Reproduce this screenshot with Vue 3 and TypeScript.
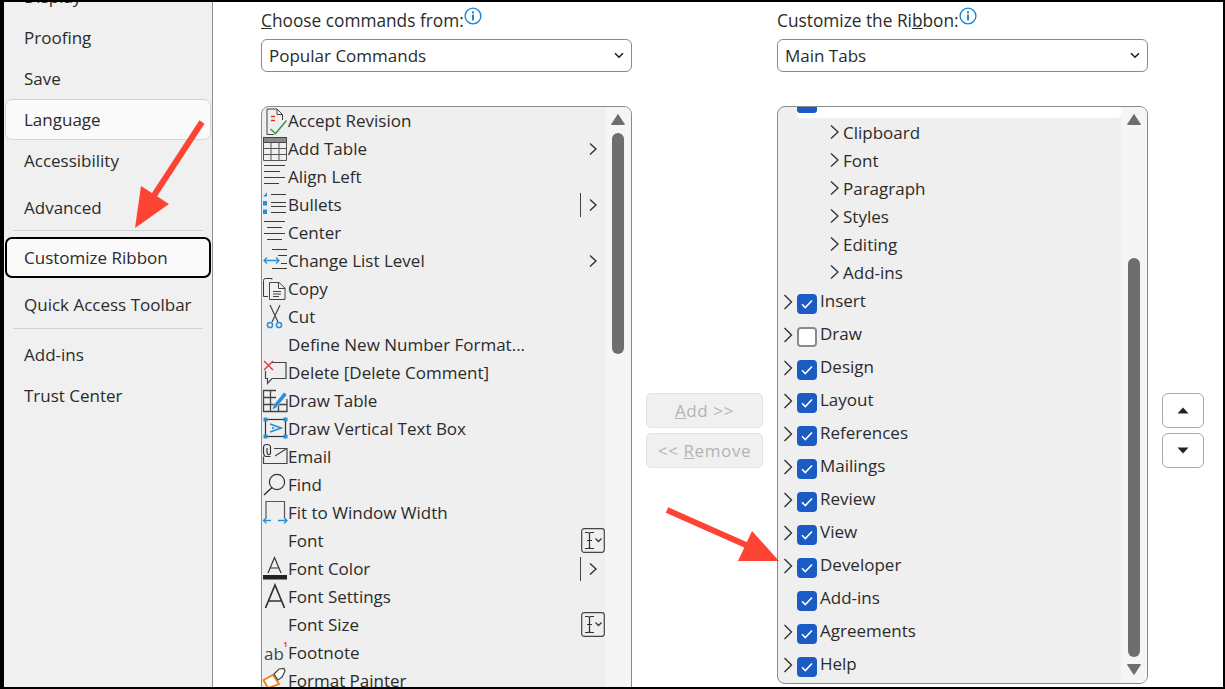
<script setup lang="ts">
interface NavItem { label: string; kind: string }
interface CmdRow { label: string; icon: string; side: string }

const nav: NavItem[] = [
  { label: 'Display', kind: 'first' },
  { label: 'Proofing', kind: '' },
  { label: 'Save', kind: '' },
  { label: 'Language', kind: 'soft' },
  { label: 'Accessibility', kind: 'low' },
  { label: 'Advanced', kind: 'adv' },
  { label: '', kind: 'sep' },
  { label: 'Customize Ribbon', kind: 'active' },
  { label: 'Quick Access Toolbar', kind: 'quick' },
  { label: '', kind: 'sep' },
  { label: 'Add-ins', kind: 'addins' },
  { label: 'Trust Center', kind: '' },
]

const commands: CmdRow[] = [
  { label: 'Accept Revision', icon: 'accept', side: '' },
  { label: 'Add Table', icon: 'table', side: 'chev' },
  { label: 'Align Left', icon: 'left', side: '' },
  { label: 'Bullets', icon: 'bullets', side: 'split' },
  { label: 'Center', icon: 'center', side: '' },
  { label: 'Change List Level', icon: 'level', side: 'chev' },
  { label: 'Copy', icon: 'copy', side: '' },
  { label: 'Cut', icon: 'cut', side: '' },
  { label: 'Define New Number Format...', icon: '', side: '' },
  { label: 'Delete [Delete Comment]', icon: 'delete', side: '' },
  { label: 'Draw Table', icon: 'drawtable', side: '' },
  { label: 'Draw Vertical Text Box', icon: 'vbox', side: '' },
  { label: 'Email', icon: 'email', side: '' },
  { label: 'Find', icon: 'find', side: '' },
  { label: 'Fit to Window Width', icon: 'fit', side: '' },
  { label: 'Font', icon: '', side: 'beam' },
  { label: 'Font Color', icon: 'color', side: 'split' },
  { label: 'Font Settings', icon: 'bigA', side: '' },
  { label: 'Font Size', icon: '', side: 'beam' },
  { label: 'Footnote', icon: 'foot', side: '' },
  { label: 'Format Painter', icon: 'painter', side: '' },
]

const groups: string[] = ['Clipboard', 'Font', 'Paragraph', 'Styles', 'Editing', 'Add-ins']

const tabs = [
  { label: 'Insert', checked: true, chev: true },
  { label: 'Draw', checked: false, chev: true },
  { label: 'Design', checked: true, chev: true },
  { label: 'Layout', checked: true, chev: true },
  { label: 'References', checked: true, chev: true },
  { label: 'Mailings', checked: true, chev: true },
  { label: 'Review', checked: true, chev: true },
  { label: 'View', checked: true, chev: true },
  { label: 'Developer', checked: true, chev: true },
  { label: 'Add-ins', checked: true, chev: false },
  { label: 'Agreements', checked: true, chev: true },
  { label: 'Help', checked: true, chev: true },
]
</script>

<template>
  <div class="frame">
    <aside class="sidebar">
      <template v-for="(item, i) in nav" :key="i">
        <div v-if="item.kind === 'sep'" class="sep"></div>
        <div v-else class="nav-item" :class="item.kind">{{ item.label }}</div>
      </template>
    </aside>

    <main class="main">
      <section class="col">
        <div class="label"><span><u>C</u>hoose commands from:</span>
          <svg class="info" width="18" height="18" viewBox="0 0 18 18"><circle cx="9" cy="9" r="7.9" fill="#fff" stroke="#1b86d6" stroke-width="1.4"/><rect x="8" y="7.6" width="2" height="5.8" fill="#1b86d6"/><rect x="8" y="4.4" width="2" height="2" fill="#1b86d6"/></svg>
        </div>
        <div class="select">Popular Commands
          <svg class="sel-chev" width="10" height="7" viewBox="0 0 10 7"><path d="M1 1.2 5 5.2 9 1.2" fill="none" stroke="#222" stroke-width="1.6"/></svg>
        </div>
        <div class="list list-left">
          <div class="rows">
            <div v-for="row in commands" :key="row.label" class="cmd">
              <svg class="cmd-icon" width="26" height="28" viewBox="0 0 26 28" fill="none" stroke="#3a3a3a" stroke-width="1">
                <template v-if="row.icon === 'accept'">
                  <path d="M5 2H15L20.5 7.5V13M15 2V7.5H20.5M5 2V27.5H12" stroke="#444"/>
                  <path d="M9 9.5H13M9 13.5H13" stroke="#e0342c" stroke-width="1.4"/>
                  <path d="M8.5 22 13.5 26.5 24.5 13.5" stroke="#3d9a4b" stroke-width="1.6"/>
                </template>
                <template v-else-if="row.icon === 'table'">
                  <rect x="1.5" y="2.5" width="23" height="5" fill="#8a8a8a" stroke="#444"/>
                  <path d="M1.5 7.5V25.5H24.5V7.5M1.5 13.5H24.5M1.5 19.5H24.5M9 7.5V25.5M17 7.5V25.5" stroke="#555"/>
                </template>
                <template v-else-if="row.icon === 'left'">
                  <path d="M2 2.5H23M2 8.5H18M2 14.5H23M2 20.5H17" />
                </template>
                <template v-else-if="row.icon === 'bullets'">
                  <path d="M9 3.5H24M9 11.5H24M9 15.5H24M9 21.5H24"/>
                  <path d="M5 1.5V5.5H1Z" fill="#2b8fd6" stroke="none"/>
                  <rect x="1" y="10" width="4" height="4.5" fill="#2b8fd6" stroke="none"/>
                  <rect x="1" y="18.5" width="4" height="4.5" fill="#2b8fd6" stroke="none"/>
                </template>
                <template v-else-if="row.icon === 'center'">
                  <path d="M2 2.5H23M5 8.5H20M2 14.5H23M5 20.5H20"/>
                </template>
                <template v-else-if="row.icon === 'level'">
                  <path d="M10 2.5H25M16 8.5H25M19 16.5H25M10 21.5H25"/>
                  <path d="M2 13.5H17M5 10.5 2 13.5 5 16.5M14 10.5 17 13.5 14 16.5" stroke="#2b8fd6" stroke-width="1.3"/>
                </template>
                <template v-else-if="row.icon === 'copy'">
                  <path d="M10 4.5V3.5H3.5Q1.5 3.5 1.5 5.5V21.5H6"/>
                  <path d="M7.5 7.5H17L23 13V24.5H7.5ZM16.5 7.5V13.5H23M11 16.5H19M11 19H19M11 21.5H17" stroke="#444"/>
                </template>
                <template v-else-if="row.icon === 'cut'">
                  <path d="M8 2 16 19M18 2 10 19" stroke="#444" stroke-width="1.2"/>
                  <circle cx="8" cy="22" r="2.6" stroke="#2b8fd6" stroke-width="1.5"/>
                  <circle cx="17" cy="22" r="2.6" stroke="#2b8fd6" stroke-width="1.5"/>
                </template>
                <template v-else-if="row.icon === 'delete'">
                  <path d="M10 3.5H24V19.5H10L5.5 24.5V19.5H3.5V12" stroke="#444" stroke-width="1.2"/>
                  <path d="M2 2 11 11M11 2 2 11" stroke="#e8352c" stroke-width="1.4"/>
                </template>
                <template v-else-if="row.icon === 'drawtable'">
                  <path d="M14 3.5H1.5V24.5H25V12M1.5 10.5H14M1.5 17.5H25M8.5 3.5V24.5M16.5 17.5V24.5" stroke="#444" stroke-width="1.3"/>
                  <path d="M10 23 11.5 18 22 5 25 8 14 21Z" fill="#2b8fd6" stroke="#fff" stroke-width=".5"/>
                </template>
                <template v-else-if="row.icon === 'vbox'">
                  <rect x="3.5" y="4.5" width="20" height="17" stroke="#333" stroke-width="1.2"/>
                  <path d="M8 9 19 13 8 17M11 12V14" stroke="#2b8fd6" stroke-width="1.8"/>
                  <rect x="1.5" y="2.5" width="4" height="4" fill="#2b8fd6" stroke="none"/>
                  <rect x="21.5" y="2.5" width="4" height="4" fill="#2b8fd6" stroke="none"/>
                  <rect x="1.5" y="19.5" width="4" height="4" fill="#2b8fd6" stroke="none"/>
                  <rect x="21.5" y="19.5" width="4" height="4" fill="#2b8fd6" stroke="none"/>
                </template>
                <template v-else-if="row.icon === 'email'">
                  <path d="M12 5.5H25V20.5H1.5V13.5M13 13 24 6" stroke="#444" stroke-width="1.2"/>
                  <path d="M8.5 13.5H4.5Q1.5 13.5 1.5 9V4.5Q1.5 1.5 5 1.5 8.5 1.5 8.5 4.5V10Q8 12 6 11.5 5 11 5 9V5" stroke="#333" stroke-width="1.2"/>
                </template>
                <template v-else-if="row.icon === 'find'">
                  <circle cx="15" cy="11" r="7.6" stroke="#333" stroke-width="1.2"/>
                  <path d="M10 16.5 2 24" stroke="#333" stroke-width="1.5"/>
                </template>
                <template v-else-if="row.icon === 'fit'">
                  <path d="M4 19V2.5H22.5V19" stroke="#555" stroke-width="1.2"/>
                  <path d="M1.5 21.5H9M4.5 18.5 1.5 21.5 4.5 24.5M16 21.5H25M22 18.5 25 21.5 22 24.5" stroke="#2b8fd6" stroke-width="1.3"/>
                </template>
                <template v-else-if="row.icon === 'color'">
                  <path d="M6 18 12.5 2.5 19 18M8 13H17" stroke="#333" stroke-width="1.2"/>
                  <rect x="1" y="20" width="24" height="4.5" fill="#222" stroke="none"/>
                </template>
                <template v-else-if="row.icon === 'bigA'">
                  <path d="M3.5 25 13 2 22.5 25M6.5 18H19.5" stroke="#333" stroke-width="1.7"/>
                </template>
                <template v-else-if="row.icon === 'foot'">
                  <text x="2" y="21" class="ab">ab</text>
                  <text x="21.5" y="8" class="one">1</text>
                </template>
                <template v-else-if="row.icon === 'painter'">
                  <path d="M1.5 13 11 8 17 17 6 21Z" fill="#fff" stroke="#e8821e" stroke-width="1.8"/>
                  <path d="M12 7 17 2 22 1.5 23 4 20 10 16 13Z" fill="#fff" stroke="#444" stroke-width="1.2"/>
                </template>
              </svg>
              <span class="cmd-label">{{ row.label }}</span>
              <span v-if="row.side === 'chev'" class="side side-chev">
                <svg width="10" height="14" viewBox="0 0 10 14"><path d="M2 1.5 8 7 2 12.5" fill="none" stroke="#333" stroke-width="1.4"/></svg>
              </span>
              <span v-else-if="row.side === 'split'" class="side side-split">
                <svg width="19" height="24" viewBox="0 0 19 24"><path d="M.5 0V24" stroke="#444" fill="none"/><path d="M10 6.5 16 12 10 17.5" fill="none" stroke="#333" stroke-width="1.4"/></svg>
              </span>
              <span v-else-if="row.side === 'beam'" class="side side-beam">
                <svg width="24" height="25" viewBox="0 0 24 25" fill="none"><rect x=".7" y=".7" width="22.6" height="23.6" rx="2.5" stroke="#444" stroke-width="1.2"/><path d="M4 4.5H7Q8.5 4.5 8.5 6V19Q8.5 20.5 7 20.5H4M13 4.5H10Q8.5 4.5 8.5 6M13 20.5H10Q8.5 20.5 8.5 19M6 12.5H11" stroke="#333" stroke-width="1.2"/><path d="M14.5 10.5 17.5 13.5 20.5 10.5" stroke="#333" stroke-width="1.3"/></svg>
              </span>
            </div>
          </div>
          <div class="track">
            <svg class="arrow-up" width="14" height="11" viewBox="0 0 14 11"><path d="M7 .5 13.5 10.5H.5Z" fill="#6e6e6e" stroke="#6e6e6e" stroke-linejoin="round"/></svg>
            <div class="thumb thumb-left"></div>
          </div>
        </div>
      </section>

      <div class="mid">
        <button class="btn" type="button"><u>A</u>dd &gt;&gt;</button>
        <button class="btn" type="button">&lt;&lt; <u>R</u>emove</button>
      </div>

      <section class="col">
        <div class="label"><span>Customize the Ri<u>b</u>bon:</span>
          <svg class="info" width="18" height="18" viewBox="0 0 18 18"><circle cx="9" cy="9" r="7.9" fill="#fff" stroke="#1b86d6" stroke-width="1.4"/><rect x="8" y="7.6" width="2" height="5.8" fill="#1b86d6"/><rect x="8" y="4.4" width="2" height="2" fill="#1b86d6"/></svg>
        </div>
        <div class="select">Main Tabs
          <svg class="sel-chev" width="10" height="7" viewBox="0 0 10 7"><path d="M1 1.2 5 5.2 9 1.2" fill="none" stroke="#222" stroke-width="1.6"/></svg>
        </div>
        <div class="list list-right">
          <div class="rows">
            <div class="home-row"><span class="home-check"></span></div>
            <div v-for="g in groups" :key="g" class="group">
              <svg width="9" height="16" viewBox="0 0 9 16"><path d="M1 1.5 8 8 1 14.5" fill="none" stroke="#333" stroke-width="1.4"/></svg>
              <span>{{ g }}</span>
            </div>
            <div class="tabs">
              <div v-for="t in tabs" :key="t.label" class="tab">
                <svg class="tab-chev" :class="{ hidden: !t.chev }" width="10" height="18" viewBox="0 0 10 18"><path d="M1.5 2 8.5 9 1.5 16" fill="none" stroke="#333" stroke-width="1.4"/></svg>
                <span class="check" :class="{ on: t.checked }">
                  <svg v-if="t.checked" width="12" height="10" viewBox="0 0 12 10"><path d="M1 5.2 4.3 8.5 11 1.5" fill="none" stroke="#fff" stroke-width="1.6"/></svg>
                </span>
                <span class="tab-label">{{ t.label }}</span>
              </div>
            </div>
          </div>
          <div class="track">
            <svg class="arrow-up" width="14" height="11" viewBox="0 0 14 11"><path d="M7 .5 13.5 10.5H.5Z" fill="#6e6e6e" stroke="#6e6e6e" stroke-linejoin="round"/></svg>
            <div class="thumb thumb-right"></div>
            <svg class="arrow-down" width="14" height="11" viewBox="0 0 14 11"><path d="M7 10.5 13.5 .5H.5Z" fill="#6e6e6e" stroke="#6e6e6e" stroke-linejoin="round"/></svg>
          </div>
        </div>
      </section>

      <div class="updown">
        <button class="btn-sq" type="button" aria-label="Move up">
          <svg width="12" height="7" viewBox="0 0 12 7"><path d="M6 .5 11.5 6.5H.5Z" fill="#222"/></svg>
        </button>
        <button class="btn-sq" type="button" aria-label="Move down">
          <svg width="12" height="7" viewBox="0 0 12 7"><path d="M6 6.5 11.5 .5H.5Z" fill="#222"/></svg>
        </button>
      </div>
    </main>

    <svg class="overlay" width="1225" height="689" viewBox="0 0 1225 689">
      <path d="M202 122 153 197" stroke="#fd4434" stroke-width="6" fill="none"/>
      <path d="M135 228 141 186 169 204Z" fill="#fd4434"/>
      <path d="M667 510 755 549" stroke="#fd4434" stroke-width="6" fill="none"/>
      <path d="M779 561 752 531 738 561Z" fill="#fd4434"/>
    </svg>
  </div>
</template>

<style>
html, body { margin: 0; padding: 0; background: #fff; }
</style>

<style scoped>
.frame {
  position: relative;
  box-sizing: border-box;
  width: 1225px;
  height: 689px;
  border: solid #000;
  border-width: 2px 2px 2px 4px;
  display: flex;
  overflow: hidden;
  background: #fff;
  color: #2b2b2b;
  font-family: "Open Sans", "Noto Sans", sans-serif;
  font-size: 17px;
}
.sidebar {
  box-sizing: border-box;
  width: 209px;
  flex: none;
  background: #f0f0f0;
  border-right: 1px solid #8f8f8f;
  padding: 0 1px;
}
.nav-item {
  box-sizing: border-box;
  height: 41px;
  line-height: 39px;
  padding-left: 19px;
}
.nav-item.first { margin-top: -25px; }
.nav-item.soft {
  margin: -1px 0 0;
  background: #fafafa;
  border: 1px solid #d4d4d4;
  border-radius: 7px;
  line-height: 39px;
  padding-left: 18px;
}
.nav-item.low { line-height: 41px; }
.nav-item.adv { margin-top: 6px; line-height: 41px; }
.nav-item.active {
  background: #fafafa;
  border: 2px solid #000;
  border-radius: 7px;
  line-height: 37px;
  padding-left: 17px;
  margin-top: 6px;
}
.nav-item.quick { margin-top: 7px; }
.nav-item.addins { margin-top: 6px; }
.sep {
  height: 1px;
  background: #d2d2d2;
  margin: 2px 8px 0;
}
.main {
  flex: 1;
  display: flex;
  padding-left: 48px;
  min-width: 0;
}
.col {
  width: 371px;
  flex: none;
}
.label {
  height: 37px;
  display: flex;
  align-items: flex-start;
  line-height: 38px;
  font-size: 17.3px;
}
.info { margin: 5px 0 0 0; }
.select {
  position: relative;
  box-sizing: border-box;
  height: 33px;
  line-height: 32px;
  padding-left: 7px;
  border: 1px solid #8a8a8a;
  border-radius: 6px;
}
.sel-chev { position: absolute; right: 7px; top: 12px; }
.list {
  box-sizing: border-box;
  display: flex;
  margin-top: 34px;
  border: 1px solid #8a8a8a;
  border-radius: 8px;
  background: #efefef;
  overflow: hidden;
}
.list-left { height: 620px; }
.list-right { height: 578px; }
.rows { flex: 1; min-width: 0; }
.cmd {
  position: relative;
  display: flex;
  align-items: center;
  height: 28px;
}
.cmd-icon { flex: none; }
.cmd-label { white-space: nowrap; margin-top: -2px; }
.side { position: absolute; display: flex; }
.side-chev { left: 326px; top: 7px; }
.side-split { left: 318px; top: 2px; }
.side-beam { left: 319px; top: 1px; }
.ab { font-family: "Open Sans", sans-serif; font-size: 17px; fill: #444; stroke: none; }
.one { font-family: "Open Sans", sans-serif; font-size: 7px; font-weight: 700; fill: #e8352c; stroke: none; }
.track {
  width: 26px;
  flex: none;
  background: #f5f5f5;
  display: flex;
  flex-direction: column;
  align-items: center;
}
.arrow-up { margin-top: 7px; flex: none; }
.arrow-down { margin-top: 7px; flex: none; }
.thumb { width: 12px; background: #6e6e6e; flex: none; }
.thumb-left { height: 221px; margin-top: 8px; border-radius: 6px; }
.thumb-right { height: 399px; margin-top: 133px; border-radius: 6px; }
.home-row {
  height: 11px;
  margin-left: 19px;
  background: #fff;
  border-radius: 0 0 4px 4px;
}
.home-check {
  display: block;
  width: 20px;
  height: 6px;
  background: #1a5cc3;
  border-radius: 0 0 3px 3px;
}
.group {
  height: 28px;
  display: flex;
  align-items: center;
  padding-left: 52px;
  gap: 4px;
}
.tabs { margin-top: -2px; }
.tab {
  height: 33px;
  display: flex;
  align-items: center;
  padding-left: 5px;
}
.tab-chev { flex: none; margin-top: 2px; }
.tab-chev.hidden { visibility: hidden; }
.check {
  box-sizing: border-box;
  width: 20px;
  height: 20px;
  flex: none;
  margin: 6px 3px 0 4px;
  border: 2px solid #8a8a8a;
  border-radius: 4px;
  background: #fff;
  display: flex;
  align-items: center;
  justify-content: center;
}
.check.on { background: #1a5cc3; border-color: #1a5cc3; }
.tab-label { margin-top: -1px; }
.mid {
  width: 117px;
  flex: none;
  margin: 391px 14px 0;
  display: flex;
  flex-direction: column;
  gap: 5px;
}
.btn {
  box-sizing: border-box;
  height: 35px;
  padding: 0;
  background: #f0f0f0;
  border: 1px solid #e2e2e2;
  border-radius: 5px;
  color: #b4b4b4;
  font: inherit;
  letter-spacing: .6px;
}
.updown {
  width: 42px;
  flex: none;
  margin: 391px 0 0 14px;
  display: flex;
  flex-direction: column;
  gap: 5px;
}
.btn-sq {
  box-sizing: border-box;
  height: 35px;
  padding: 0;
  background: #fff;
  border: 1px solid #a9a9a9;
  border-radius: 6px;
  display: flex;
  align-items: center;
  justify-content: center;
}
.overlay {
  position: absolute;
  left: -4px;
  top: -2px;
  pointer-events: none;
}
</style>
